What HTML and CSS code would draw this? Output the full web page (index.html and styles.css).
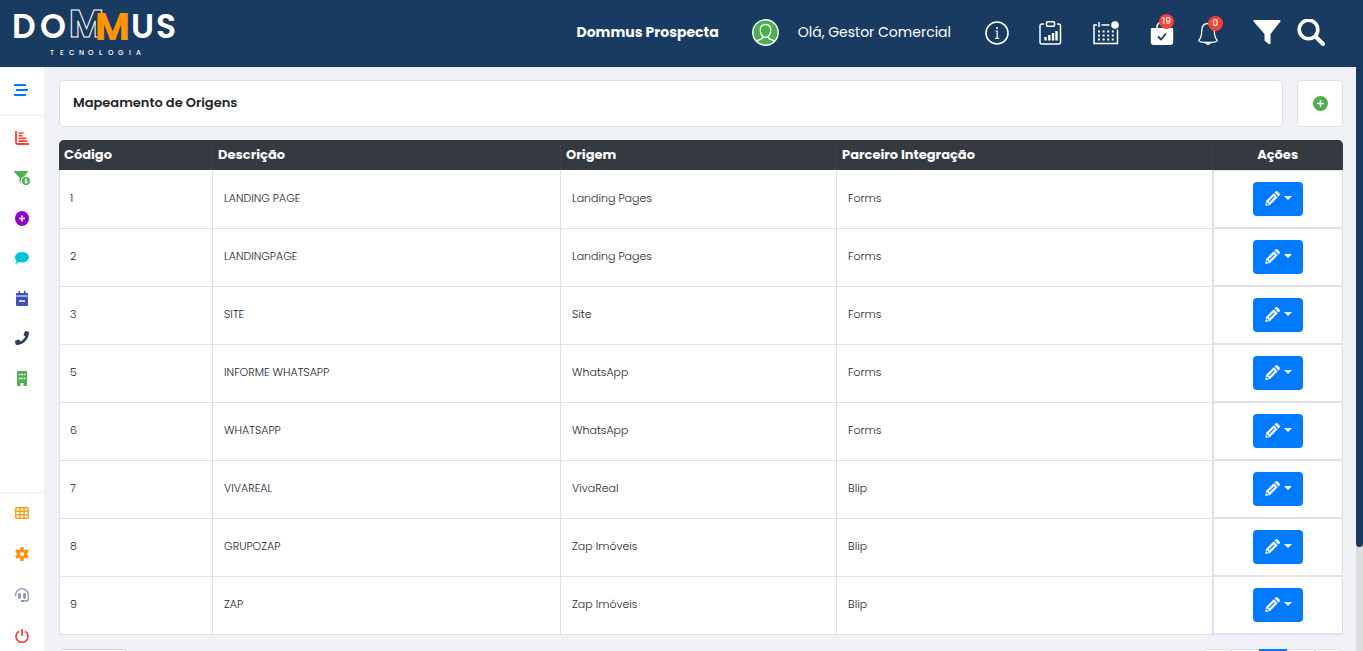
FILE: index.html
```html
<!DOCTYPE html>
<html lang="pt-BR">
<head>
  <meta charset="UTF-8" />
  <meta name="viewport" content="width=device-width, initial-scale=1" />
  <title>Mapeamento de Origens</title>
  <link rel="stylesheet" href="styles.css">
</head>
<body>
  <div class="app">
    <header class="topbar">
      <a href="#" class="logo" aria-label="Dommus Tecnologia">
        <svg width="180" height="60" viewBox="0 0 180 60">
          <g class="logo-letters">
            <text x="12" y="38">D</text>
            <text x="40" y="38">O</text>
            <text x="131" y="38">U</text>
            <text x="156" y="38">S</text>
          </g>
          <text class="logo-outline" x="69" y="37">M</text>
          <text class="logo-orange" x="95" y="40">M</text>
          <text class="logo-sub" x="50 60 69 79 88 99 108 118 129 136" y="55">TECNOLOGIA</text>
        </svg>
      </a>
      <strong class="product">Dommus Prospecta</strong>
      <svg class="avatar" width="27" height="27" viewBox="0 0 27 27" fill="none" stroke="#fff">
        <circle cx="13.5" cy="13.5" r="12.7" fill="#4caf50" stroke-width="1.4"/>
        <path d="M13.5 5.500c-3.600 0-5.300 2.400-5.300 5.800 0 2.300.8 4.400 2.300 5.700v2c-.4 1.200-3.600 1.700-6 3.200M13.500 5.500c3.600 0 5.300 2.400 5.300 5.800 0 2.300-.8 4.400-2.300 5.700v2c.4 1.200 3.600 1.700 6 3.200M10.500 17c1.800 1.700 4.200 1.700 6 0" stroke-width="1.3"/>
      </svg>
      <span class="greeting">Olá, Gestor Comercial</span>
      <div class="tools">
        <button class="tool" aria-label="Informações">
          <svg width="24" height="24" viewBox="0 0 24 24" fill="none" stroke="#fff">
            <circle cx="12" cy="12" r="11" stroke-width="1.6"/>
            <path d="M10.500 10h1.700v7M10 17.300h4.200" stroke-width="1.200"/>
            <circle cx="12" cy="7" r="1" fill="#fff" stroke="none"/>
          </svg>
        </button>
        <button class="tool" aria-label="Relatórios">
          <svg width="24" height="24" viewBox="0 0 24 24" fill="none" stroke="#fff">
            <path d="M5 3H3A2 2 0 0 0 1 5v16a2 2 0 0 0 2 2h16.500a2 2 0 0 0 2-2V5a2 2 0 0 0-2-2H18" stroke-width="1.500"/>
            <rect x="7.500" y=".8" width="8" height="4.500" rx="1" stroke-width="1.500"/>
            <path d="M6.500 16v3.500M10.300 14v5.500M14 12v7.500M17.500 10v9.500" stroke-width="2.400"/>
          </svg>
        </button>
        <button class="tool" aria-label="Calendário">
          <svg width="27" height="24" viewBox="0 0 27 24" fill="none" stroke="#fff">
            <path d="M4 4H1v18.500h23.500V8.500M8.500 4h8M6 1v5" stroke-width="1.500"/>
            <path d="M5 10.500h17M5 14.500h17M5 18.500h17" stroke-width="2" stroke-dasharray="2 2.600"/>
            <circle cx="22" cy="4" r="3.800" fill="#fff" stroke="none"/>
          </svg>
        </button>
        <div class="alerts">
          <button class="tool" aria-label="Tarefas">
            <svg width="24" height="24" viewBox="0 0 24 24" fill="none">
              <path d="M7 8V6a5 5 0 0 1 10 0v2" stroke="#fff" stroke-width="1.600"/>
              <path d="M2 7h20a1.200 1.200 0 0 1 1.200 1.200V21a3 3 0 0 1-3 3H3.800a3 3 0 0 1-3-3V8.200A1.200 1.200 0 0 1 2 7z" fill="#fff"/>
              <path d="M8 15.500l3 3 5-6" stroke="#1a3b61" stroke-width="1.800"/>
            </svg>
            <span class="badge badge-inset">19</span>
          </button>
          <button class="tool" aria-label="Notificações">
            <svg width="20" height="24" viewBox="0 0 20 24" fill="none" stroke="#fff" stroke-width="1.300">
              <path d="M10 2.500c-4 0-6 3-6.200 6.500-.2 5.500-.8 8.500-3 10.200 0 2 3 2.300 9.200 2.300s9.200-.3 9.200-2.300c-2.200-1.700-2.800-4.700-3-10.200C16 5.500 14 2.500 10 2.500z"/>
              <path d="M7.500 21.800c.8 1.900 4.200 1.900 5 0"/>
            </svg>
            <span class="badge">0</span>
          </button>
        </div>
        <div class="finders">
          <button class="tool" aria-label="Filtrar">
            <svg width="28" height="28" viewBox="0 0 28 28" fill="#fff">
              <path d="M1.500 1h25c1 0 1.300 1 .7 1.800L17.500 15v9.200c0 1-.9 1.300-1.700.8l-3.600-2.700c-.5-.3-.7-.8-.7-1.300v-6L.8 2.800C.2 2 .5 1 1.500 1z"/>
            </svg>
          </button>
          <button class="tool" aria-label="Pesquisar">
            <svg width="28" height="28" viewBox="0 0 28 28" fill="none" stroke="#fff">
              <circle cx="11.500" cy="10.500" r="9.300" stroke-width="3.600"/>
              <path d="M18.500 17.500L26 25" stroke-width="4" stroke-linecap="round"/>
            </svg>
          </button>
        </div>
      </div>
    </header>

    <div class="content">
      <aside class="sidebar">
        <button class="menu-toggle" aria-label="Menu">
          <svg width="16" height="12" viewBox="0 0 16 12" stroke="#007bff" stroke-width="2">
            <path d="M0 1h12M2 6h12M0 11h12"/>
          </svg>
        </button>
        <nav class="menu" aria-label="Principal">
          <a href="#" aria-label="Painel">
            <svg width="14" height="14" viewBox="0 0 14 14" fill="none" stroke="#f44336">
              <path d="M1 0v11.500Q1 13 2.500 13H14" stroke-width="1.800"/>
              <path d="M3.500 2h5M3.500 4.700h4M3.500 7.400h8M3.500 10.100h9" stroke-width="1.700"/>
            </svg>
          </a>
          <a href="#" aria-label="Funil">
            <svg width="16" height="14" viewBox="0 0 16 14">
              <path d="M.5 0h13c.5 0 .6.500.3.900L10 5.500A5 5 0 0 0 7.500 13L5.500 11V6.500L.2.900C-.1.500 0 0 .5 0z" fill="#4caf50"/>
              <circle cx="12" cy="10" r="4" fill="#4caf50"/>
              <path d="M13.500 8.700c-.6-.6-2.800-.7-2.800.4 0 1.300 2.800.5 2.800 1.900 0 1-2.200 1-3 .2M12 7.500v5" fill="none" stroke="#fff" stroke-width=".8"/>
            </svg>
          </a>
          <a href="#" aria-label="Adicionar">
            <svg width="14" height="15" viewBox="0 0 14 15">
              <ellipse cx="7" cy="7.500" rx="7" ry="7.500" fill="#8e06c4"/>
              <path d="M7 4.500v6M4 7.500h6" stroke="#fff" stroke-width="1.500"/>
            </svg>
          </a>
          <a href="#" aria-label="Conversas">
            <svg width="14" height="14" viewBox="0 0 14 14" fill="#00c4d9">
              <path d="M7 1c3.900 0 7 2.300 7 5.300s-3.100 5.300-7 5.300c-1 0-2-.2-2.900-.5C3.200 11.900 1.800 12.800 0 12.800c.9-.9 1.400-2 1.500-2.900C.6 9 0 7.700 0 6.300 0 3.300 3.100 1 7 1z"/>
            </svg>
          </a>
          <a href="#" aria-label="Agenda">
            <svg width="12" height="15" viewBox="0 0 12 15">
              <path d="M1 2h10q1 0 1 1v1.500H0V3q0-1 1-1zM0 5.500h12V14q0 1-1 1H1q-1 0-1-1zM2.500 0h1.500v3H2.500zM8 0h1.500v3H8z" fill="#3f51b5"/>
              <path d="M3 10h6" stroke="#fff" stroke-width="1.500"/>
            </svg>
          </a>
          <a href="#" aria-label="Telefone">
            <svg width="14" height="14" viewBox="0 0 512 512" fill="#2b3f5c">
              <path d="M493 25L389 1c-11-3-23 3-27 14l-48 112c-4 10-1 21 7 28l60 49c-36 76-98 139-176 176l-49-60c-7-8-18-11-28-7L16 361c-11 5-17 17-14 28l24 104c3 11 12 19 24 19 256 0 462-207 462-462 0-12-8-22-19-25z"/>
            </svg>
          </a>
          <a href="#" aria-label="Empreendimentos">
            <svg width="10" height="15" viewBox="0 0 10 15">
              <path d="M1 0h8q1 0 1 1v13q0 1-1 1H6.500v-3h-3v3H1q-1 0-1-1V1q0-1 1-1z" fill="#4caf50"/>
              <path d="M1.700 3.500h7M1.700 7.500h7" stroke="#fff" stroke-width="1.600" stroke-dasharray="1.600 .9"/>
            </svg>
          </a>
        </nav>
        <nav class="menu menu-bottom" aria-label="Sistema">
          <a href="#" aria-label="Tabelas">
            <svg width="14" height="12" viewBox="0 0 14 12" fill="none" stroke="#f5a01f" stroke-width="1.400">
              <rect x=".7" y=".7" width="12.600" height="10.600" rx="1"/>
              <path d="M1 4.200h12M1 7.800h12M5 1v10M9 1v10"/>
            </svg>
          </a>
          <a href="#" aria-label="Configurações">
            <svg width="14" height="14" viewBox="0 0 14 14">
              <circle cx="7" cy="7" r="3.600" fill="none" stroke="#ff9113" stroke-width="3"/>
              <path d="M7 0v3M7 11v3M1 3.500L3.500 5M10.500 9l2.500 1.500M1 10.500L3.500 9M10.500 5L13 3.500" stroke="#ff9113" stroke-width="3.400"/>
            </svg>
          </a>
          <a href="#" aria-label="Suporte">
            <svg width="14" height="14" viewBox="0 0 14 14" fill="none" stroke="#8c93b3">
              <path d="M.7 8V6.500a6.300 5.800 0 0 1 12.600 0V11q0 2-2 2H7" stroke-width="1.300"/>
              <path d="M4.500 6.500v3M9.500 6.500v3" stroke-width="2.800" stroke-linecap="round"/>
              <path d="M6 13h3" stroke-width="2"/>
            </svg>
          </a>
          <a href="#" aria-label="Sair">
            <svg width="14" height="14" viewBox="0 0 14 14" fill="none" stroke="#f44336" stroke-width="1.700">
              <path d="M4 2.200a6 6 0 1 0 6 0M7 0v7"/>
            </svg>
          </a>
        </nav>
      </aside>

      <main class="page">
        <div class="page-head">
          <h1 class="card page-title">Mapeamento de Origens</h1>
          <button class="card add-button" aria-label="Adicionar origem">
            <svg width="15" height="15" viewBox="0 0 15 15">
              <circle cx="7.500" cy="7.500" r="7.500" fill="#4caf50"/>
              <path d="M7.500 4v7M4 7.500h7" stroke="#fff" stroke-width="1.400"/>
            </svg>
          </button>
        </div>

        <table class="origins">
          <colgroup>
            <col class="col-code"><col class="col-description"><col class="col-origin"><col class="col-partner"><col class="col-actions">
          </colgroup>
          <thead>
            <tr><th>Código</th><th>Descrição</th><th>Origem</th><th>Parceiro Integração</th><th>Ações</th></tr>
          </thead>
          <tbody id="rows"></tbody>
        </table>

        <div class="table-footer">
          <select class="page-size" aria-label="Itens por página">
            <option>10</option>
            <option>25</option>
            <option>50</option>
          </select>
          <nav class="pagination" aria-label="Paginação">
            <button>«</button>
            <button>‹</button>
            <button class="active">1</button>
            <button>›</button>
            <button>»</button>
          </nav>
        </div>
      </main>
    </div>
  </div>
  <div class="scroll-track"><div class="scroll-thumb"></div></div>

  <script>
    const rows = [
      [1, 'LANDING PAGE', 'Landing Pages', 'Forms'],
      [2, 'LANDINGPAGE', 'Landing Pages', 'Forms'],
      [3, 'SITE', 'Site', 'Forms'],
      [5, 'INFORME WHATSAPP', 'WhatsApp', 'Forms'],
      [6, 'WHATSAPP', 'WhatsApp', 'Forms'],
      [7, 'VIVAREAL', 'VivaReal', 'Blip'],
      [8, 'GRUPOZAP', 'Zap Imóveis', 'Blip'],
      [9, 'ZAP', 'Zap Imóveis', 'Blip']
    ];

    const editButton = `
      <button class="edit-button" aria-label="Editar">
        <svg width="15" height="15" viewBox="0 0 15 15">
          <path d="M8.700 2.300l4 4L5 14l-4.600 1 .6-4.900z" fill="#fff"/>
          <path d="M9.500 1.500l1-1q1-.8 2 0l2 2q.8 1 0 2l-1 1z" fill="#fff"/>
          <path d="M4 10.900L9.300 5.600M1.500 11.700l1.800 1.800" stroke="#007bff" stroke-width="1.200"/>
        </svg>
        <span class="caret"></span>
      </button>`;

    document.getElementById('rows').innerHTML = rows.map(row =>
      `<tr>${row.map(cell => `<td>${cell}</td>`).join('')}<td class="actions">${editButton}</td></tr>`
    ).join('');
  </script>
</body>
</html>
```
FILE: styles.css
```css
* {
  box-sizing: border-box;
}

body {
  display: flex;
  height: 100vh;
  margin: 0;
  overflow: hidden;
  background-color: #f1f2f7;
  color: #212529;
  font-family: Poppins, Inter, 'Open Sans', sans-serif;
  font-size: 11px;
}

button {
  padding: 0;
  border: none;
  background: none;
  font-family: inherit;
  cursor: pointer;
}

svg {
  display: block;
}

.app {
  flex: 1;
  display: flex;
  flex-direction: column;
  min-width: 0;
}

/* top bar */
.topbar {
  flex: none;
  display: flex;
  align-items: center;
  height: 67px;
  padding: 0 31px 2px 0;
  background-color: #1a3b61;
  color: #fff;
}

.logo {
  margin-right: auto;
  align-self: flex-start;
}

.logo-letters {
  fill: #fff;
  font-size: 33px;
  font-weight: 600;
}

.logo-outline,
.logo-orange {
  font-size: 38px;
  font-weight: 700;
}

.logo-outline {
  fill: none;
  stroke: #fff;
  stroke-width: 1px;
}

.logo-orange {
  fill: #ff9500;
}

.logo-sub {
  fill: #fff;
  font-size: 7px;
  font-weight: 500;
}

.product {
  font-size: 14px;
  font-weight: 700;
}

.avatar {
  margin: 0 19px 0 33px;
}

.greeting {
  font-size: 14px;
  font-weight: 400;
}

.tools {
  display: flex;
  align-items: center;
  gap: 30px;
  margin-left: 34px;
}

.alerts {
  display: flex;
  gap: 24px;
}

.finders {
  display: flex;
  gap: 16px;
  margin-left: 5px;
}

.tool {
  position: relative;
}

.badge {
  position: absolute;
  top: -5px;
  right: -5px;
  min-width: 15px;
  height: 15px;
  border-radius: 8px;
  background-color: #f44336;
  color: #fff;
  font-size: 9px;
  font-weight: 500;
  line-height: 15px;
  text-align: center;
}

.badge-inset {
  top: -7px;
  right: 0;
}

/* sidebar */
.content {
  flex: 1;
  display: flex;
  min-height: 0;
}

.sidebar {
  flex: none;
  display: flex;
  flex-direction: column;
  width: 44px;
  background-color: #fff;
}

.menu-toggle {
  display: flex;
  align-items: center;
  justify-content: center;
  height: 49px;
  padding-bottom: 3px;
  border-bottom: 1px solid #eeeff3;
}

.menu {
  display: flex;
  flex-direction: column;
  gap: 10px;
  padding-top: 7px;
}

.menu a {
  display: flex;
  align-items: center;
  justify-content: center;
  height: 30px;
}

.menu-bottom {
  gap: 11px;
  margin-top: auto;
  padding-top: 5px;
  border-top: 1px solid #eeeff3;
}

/* page */
.page {
  flex: 1;
  min-width: 0;
  padding: 13px 13px 0 15px;
  overflow: hidden;
}

.page-head {
  display: flex;
  gap: 14px;
  margin-bottom: 13px;
}

.card {
  height: 47px;
  border: 1px solid #dfdfdf;
  border-radius: 4px;
  background-color: #fff;
}

.page-title {
  flex: 1;
  margin: 0;
  padding: 0 13px;
  font-size: 13px;
  font-weight: 600;
  line-height: 44px;
}

.add-button {
  display: flex;
  align-items: center;
  justify-content: center;
  width: 46px;
}

.origins {
  width: 100%;
  table-layout: fixed;
  border-collapse: separate;
  border-spacing: 0;
}

.col-code { width: 12%; }
.col-description { width: 27.1%; }
.col-origin { width: 21.5%; }
.col-partner { width: 29.3%; }
.col-actions { width: 10.1%; }

.origins th {
  height: 30px;
  padding: 0 5px;
  border-right: 1px solid #3f4046;
  background-color: #343a40;
  color: #fff;
  font-size: 13px;
  font-weight: 700;
  text-align: left;
}

.origins th:first-child {
  border-top-left-radius: 5px;
}

.origins th:last-child {
  border-top-right-radius: 5px;
  text-align: center;
}

.origins td {
  height: 58px;
  padding: 0 11px 2px;
  border-right: 1px solid #dee2e6;
  border-bottom: 1px solid #dee2e6;
  background-color: #fff;
  font-weight: 300;
}

.origins td:first-child {
  padding-left: 10px;
  border-left: 1px solid #dee2e6;
}

.origins tr:first-child td {
  height: 59px;
}

.origins .actions {
  padding-bottom: 0;
  border-left: 1px solid #dee2e6;
  border-bottom-width: 2px;
}

.origins tr:first-child .actions {
  border-top: 1px solid #dee2e6;
}

.edit-button {
  display: flex;
  align-items: center;
  justify-content: center;
  gap: 4px;
  width: 50px;
  height: 34px;
  margin: 0 auto;
  padding-bottom: 2px;
  border-radius: 4px;
  background-color: #007bff;
}

.caret {
  border-top: 4px solid #fff;
  border-left: 4px solid transparent;
  border-right: 4px solid transparent;
}

.table-footer {
  display: flex;
  justify-content: space-between;
  margin-top: 14px;
}

.page-size {
  width: 69px;
  height: 34px;
  border: 1px solid #ced4da;
  border-radius: 4px;
  background-color: #fff;
}

.pagination {
  display: flex;
}

.pagination button {
  width: 28px;
  height: 34px;
  border: 1px solid #dee2e6;
  background-color: #fff;
  color: #007bff;
}

.pagination button:first-child {
  border-radius: 4px 0 0 4px;
}

.pagination button:last-child {
  border-radius: 0 4px 4px 0;
}

.pagination .active {
  border-color: #007bff;
  background-color: #007bff;
  color: #fff;
}

/* page scroll indicator */
.scroll-track {
  flex: none;
  width: 7px;
  background-color: #ddd;
}

.scroll-thumb {
  height: 84%;
  border-radius: 0 0 5px 5px;
  background-color: #1a3b61;
}
```
